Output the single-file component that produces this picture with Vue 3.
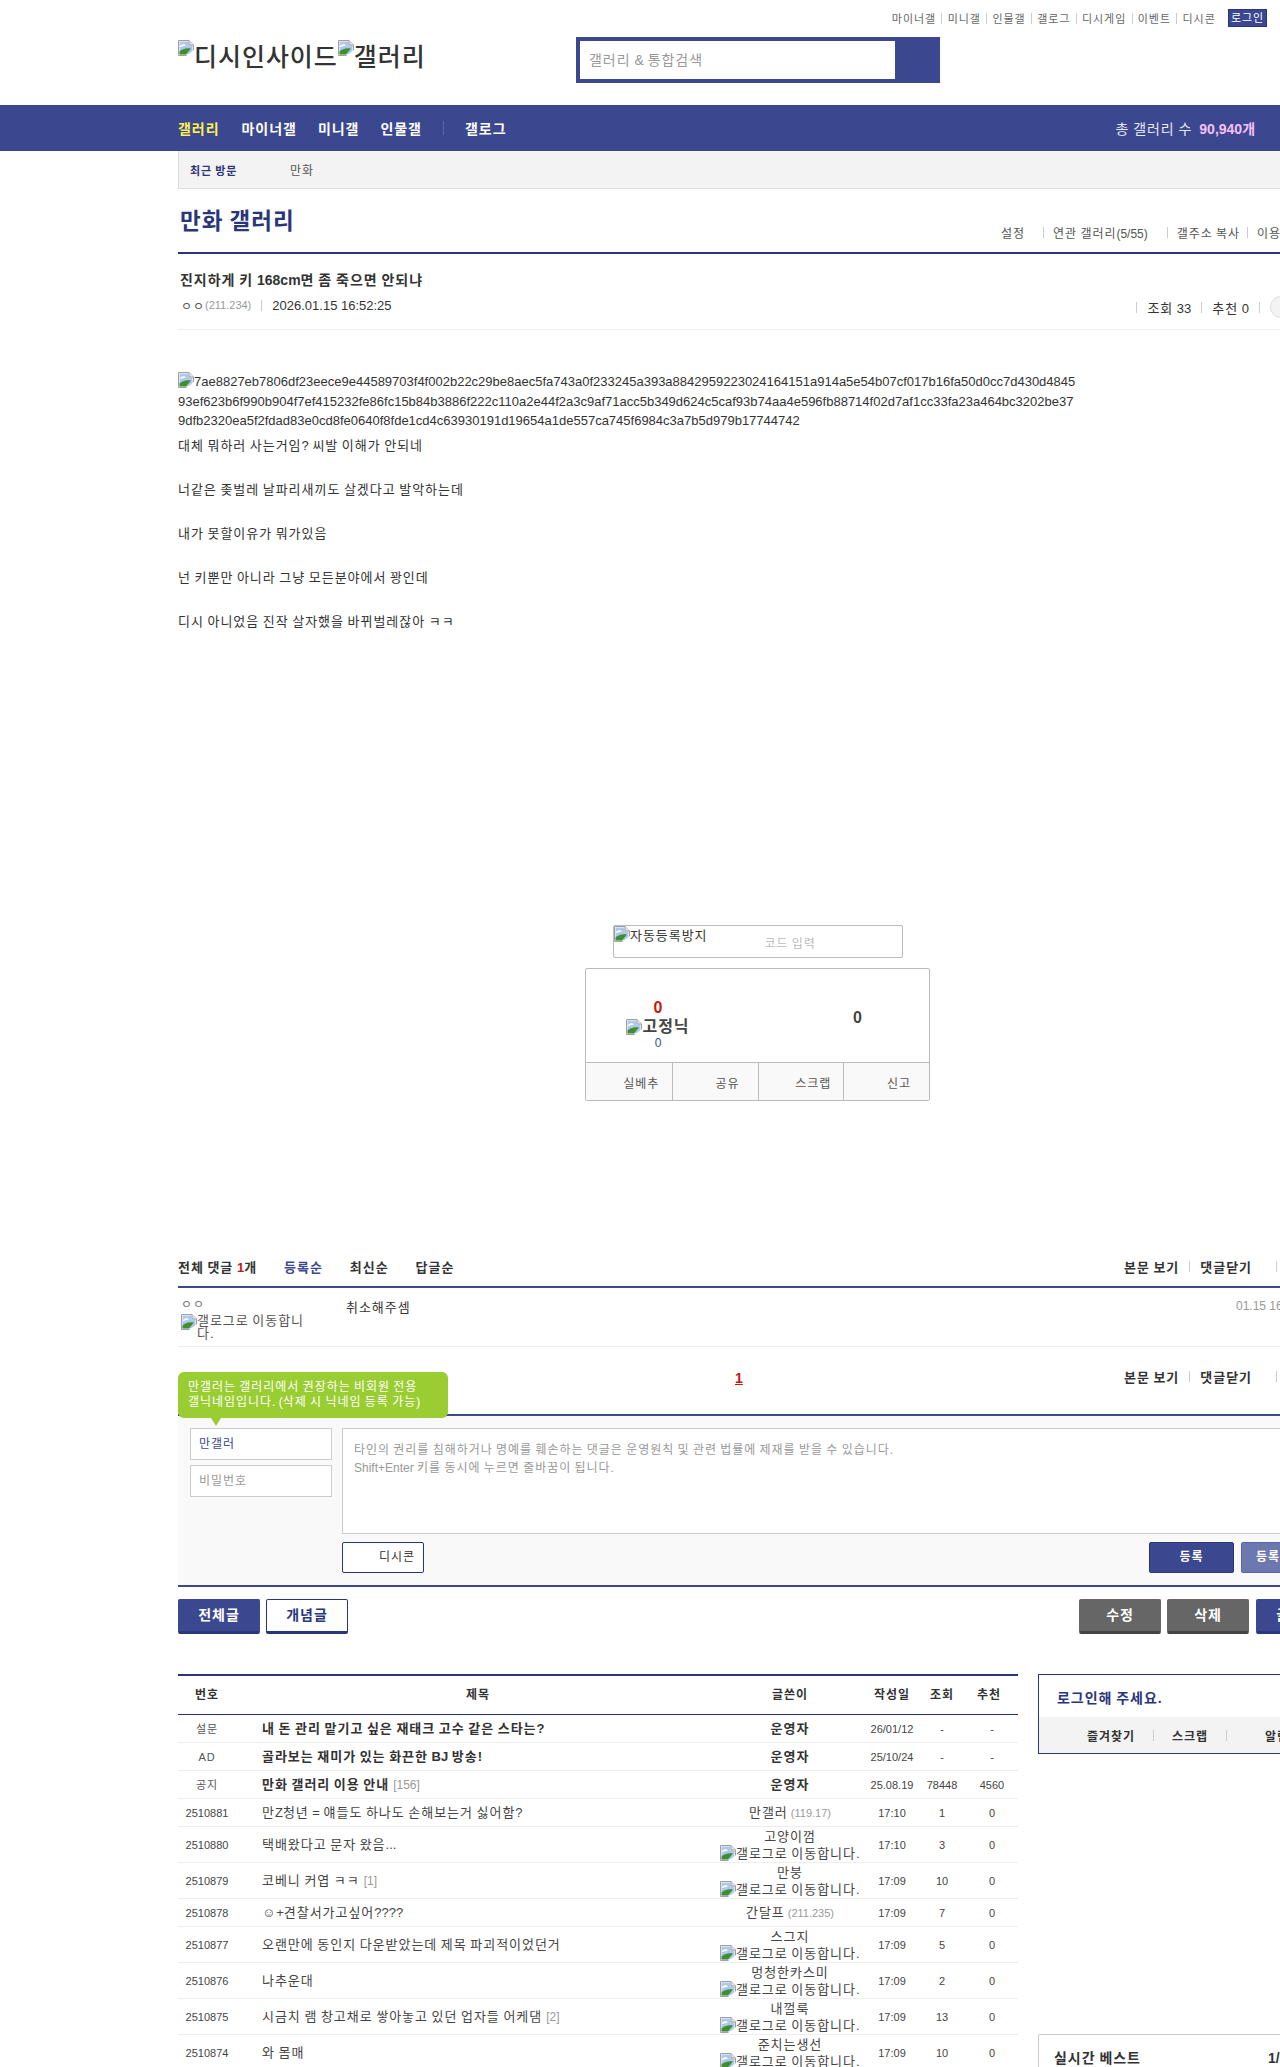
<script setup>
import { h } from 'vue'

// the hangul here sets on a full em, so .page spaces it out; ascii runs must stay at normal width
const T = (props) =>
  props.t.split(/([\x00-\x7f]+)/).filter(Boolean).map((run) =>
    /^[\x00-\x7f]/.test(run) ? h('span', { class: 'lat' }, run) : run
  )
T.props = ['t']

const topLinks = ['마이너갤', '미니갤', '인물갤', '갤로그', '디시게임', '이벤트', '디시콘']

const bodyLines = [
  '대체 뭐하러 사는거임? 씨발 이해가 안되네',
  '너같은 좆벌레 날파리새끼도 살겠다고 발악하는데',
  '내가 못할이유가 뭐가있음',
  '넌 키뿐만 아니라 그냥 모든분야에서 꽝인데',
  '디시 아니었음 진작 살자했을 바뀌벌레잖아 ㅋㅋ'
]

// notice rows come first and are bold, the taller rows have a gallog icon under the name
const rows = [
  { num: '설문', title: '내 돈 관리 맡기고 싶은 재태크 고수 같은 스타는?', name: '운영자', date: '26/01/12', views: '-', rec: '-', notice: true },
  { num: 'AD', title: '골라보는 재미가 있는 화끈한 BJ 방송!', name: '운영자', date: '25/10/24', views: '-', rec: '-', notice: true },
  { num: '공지', title: '만화 갤러리 이용 안내', reply: '[156]', name: '운영자', date: '25.08.19', views: '78448', rec: '4560', notice: true },
  { num: '2510881', title: '만Z청년 = 얘들도 하나도 손해보는거 싫어함?', name: '만갤러', ip: '(119.17)', date: '17:10', views: '1', rec: '0' },
  { num: '2510880', title: '택배왔다고 문자 왔음...', name: '고양이껌', gallog: true, date: '17:10', views: '3', rec: '0' },
  { num: '2510879', title: '코베니 커엽 ㅋㅋ', reply: '[1]', name: '만붕', gallog: true, date: '17:09', views: '10', rec: '0' },
  { num: '2510878', title: '☺+견찰서가고싶어????', name: '간달프', ip: '(211.235)', date: '17:09', views: '7', rec: '0' },
  { num: '2510877', title: '오랜만에 동인지 다운받았는데 제목 파괴적이었던거', name: '스그지', gallog: true, date: '17:09', views: '5', rec: '0' },
  { num: '2510876', title: '나추운대', name: '멍청한카스미', gallog: true, date: '17:09', views: '2', rec: '0' },
  { num: '2510875', title: '시금치 램 창고채로 쌓아놓고 있던 업자들 어케댐', reply: '[2]', name: '내껄룩', gallog: true, date: '17:09', views: '13', rec: '0' },
  { num: '2510874', title: '와 몸매', name: '준치는생선', gallog: true, date: '17:09', views: '10', rec: '0' }
]
</script>

<template>
  <div class="page">
    <svg class="defs" width="0" height="0">
      <symbol id="broken" viewBox="0 0 16 16">
        <path d="M0.5 0.5H11L15.5 5V15.5H0.5Z" fill="#fff" stroke="#a0a0a0" />
        <path d="M1.5 1.5H10.5V5.5H14.5V14.5H1.5Z" fill="#adc8ee" />
        <path d="M2 6C4 3.6 7 3.8 8 5.6C6 6 4 6.4 2 7Z" fill="#fff" />
        <path d="M1.5 14.5V11.5C4 9 8 7.5 13 8.5L8 14.5Z" fill="#3f8f2e" />
        <path d="M11 0.5V5H15.5" fill="#e4e4e4" stroke="#a0a0a0" />
        <path d="M8 16L16 10V16Z" fill="#fff" />
      </symbol>
    </svg>

    <header class="head">
      <div class="top-links">
        <template v-for="(link, i) in topLinks" :key="link">
          <a>{{ link }}</a>
          <i v-if="i < topLinks.length - 1" class="bar"></i>
        </template>
        <span class="login">로그인</span>
      </div>
      <div class="logo-row">
        <div class="logo">
          <svg class="broken"><use href="#broken" /></svg>디시인사이드<svg class="broken"><use href="#broken" /></svg>갤러리
        </div>
        <div class="search">
          <div class="search-input"><T t="갤러리 & 통합검색" /></div>
        </div>
      </div>
    </header>

    <nav class="nav">
      <a class="on">갤러리</a>
      <a>마이너갤</a>
      <a>미니갤</a>
      <a>인물갤</a>
      <i class="nav-bar"></i>
      <a>갤로그</a>
      <div class="nav-count">총 갤러리 수 <b><T t="90,940개" /></b></div>
    </nav>

    <main class="wrap">
      <div class="recent">
        <b>최근 방문</b>
        <span>만화</span>
      </div>

      <div class="gall-head">
        <h2>만화 갤러리</h2>
        <div class="gall-links">
          <a class="w-set">설정</a>
          <i class="bar"></i>
          <a class="w-rel"><T t="연관 갤러리(5/55)" /></a>
          <i class="bar"></i>
          <a class="w-copy">갤주소 복사</a>
          <i class="bar"></i>
          <a>이용</a>
        </div>
      </div>

      <div class="post-head">
        <h3><T t="진지하게 키 168cm면 좀 죽으면 안되냐" /></h3>
        <div class="post-meta">
          <div class="writer">
            <span class="nick">ㅇㅇ</span><span class="ip">(211.234)</span>
            <i class="bar"></i>
            <span class="date">2026.01.15 16:52:25</span>
          </div>
          <div class="counts">
            <i class="bar"></i>
            <span><T t="조회 33" /></span>
            <i class="bar"></i>
            <span><T t="추천 0" /></span>
            <i class="bar"></i>
            <span class="circle"></span>
          </div>
        </div>
      </div>

      <article class="post-body">
        <div class="hash">
          <svg class="broken"><use href="#broken" /></svg>7ae8827eb7806df23eece9e44589703f4f002b22c29be8aec5fa743a0f233245a393a8842959223024164151a914a5e54b07cf017b16fa50d0cc7d430d4845<br />93ef623b6f990b904f7ef415232fe86fc15b84b3886f222c110a2e44f2a3c9af71acc5b349d624c5caf93b74aa4e596fb88714f02d7af1cc33fa23a464bc3202be37<br />9dfb2320ea5f2fdad83e0cd8fe0640f8fde1cd4c63930191d19654a1de557ca745f6984c3a7b5d979b17744742
        </div>
        <p v-for="line in bodyLines" :key="line"><T :t="line" /></p>
      </article>

      <section class="vote-area">
        <div class="captcha">
          <span class="captcha-alt"><svg class="broken"><use href="#broken" /></svg>자동등록방지</span>
          <span class="captcha-ph">코드 입력</span>
        </div>
        <div class="vote">
          <div class="vote-top">
            <div class="vote-up">
              <b class="red">0</b>
              <div class="fixed"><svg class="broken"><use href="#broken" /></svg>고정닉</div>
              <span class="fixed-num">0</span>
            </div>
            <b class="vote-down">0</b>
          </div>
          <div class="vote-btns">
            <span>실베추</span>
            <span>공유</span>
            <span>스크랩</span>
            <span>신고</span>
          </div>
        </div>
      </section>

      <section class="cmt-bar">
        <div class="cmt-tabs">
          <b class="cmt-total">전체 댓글 <em class="lat">1</em>개</b>
          <b class="cur">등록순</b>
          <b>최신순</b>
          <b>답글순</b>
        </div>
        <div class="cmt-side">
          <b>본문 보기</b><i class="bar"></i><b>댓글닫기</b><i class="bar far"></i>
        </div>
      </section>

      <div class="cmt-row">
        <div class="cmt-who">
          <span class="cmt-nick">ㅇㅇ</span>
          <div class="cmt-gallog"><svg class="broken"><use href="#broken" /></svg><span>갤로그로 이동합니다.</span></div>
        </div>
        <div class="cmt-text">취소해주셈</div>
        <div class="cmt-date">01.15 16:58:11</div>
      </div>

      <div class="cmt-pager">
        <a class="page-num">1</a>
        <div class="cmt-side">
          <b>본문 보기</b><i class="bar"></i><b>댓글닫기</b><i class="bar far"></i>
        </div>
        <div class="tip">
          만갤러는 갤러리에서 권장하는 비회원 전용<br /><T t="갤닉네임입니다. (삭제 시 닉네임 등록 가능)" />
        </div>
      </div>

      <form class="cmt-form" @submit.prevent>
        <div class="form-main">
          <div class="form-user">
            <div class="field nick-field">만갤러</div>
            <div class="field">비밀번호</div>
          </div>
          <div class="form-text">
            <T t="타인의 권리를 침해하거나 명예를 훼손하는 댓글은 운영원칙 및 관련 법률에 제재를 받을 수 있습니다." /><br />
            <T t="Shift+Enter 키를 동시에 누르면 줄바꿈이 됩니다." />
          </div>
        </div>
        <div class="form-btns">
          <span class="dccon">디시콘</span>
          <span class="btn-row">
            <span class="submit">등록</span>
            <span class="submit light"><T t="등록+추천" /></span>
          </span>
        </div>
      </form>

      <div class="list-btns">
        <div class="btn-row">
          <span class="btn navy">전체글</span>
          <span class="btn outline">개념글</span>
        </div>
        <div class="btn-row">
          <span class="btn gray">수정</span>
          <span class="btn gray">삭제</span>
          <span class="btn navy write">글쓰기</span>
        </div>
      </div>

      <div class="bottom">
        <table class="list">
          <colgroup>
            <col class="c-num" />
            <col class="c-title" />
            <col class="c-name" />
            <col class="c-date" />
            <col class="c-views" />
            <col class="c-rec" />
          </colgroup>
          <thead>
            <tr>
              <th>번호</th>
              <th>제목</th>
              <th>글쓴이</th>
              <th>작성일</th>
              <th>조회</th>
              <th>추천</th>
            </tr>
          </thead>
          <tbody>
            <tr v-for="row in rows" :key="row.num" :class="{ notice: row.notice, tall: row.gallog }">
              <td class="num">{{ row.num }}</td>
              <td class="title">
                <span><T :t="row.title" /></span><em v-if="row.reply">{{ row.reply }}</em>
              </td>
              <td class="name">
                {{ row.name }}<small v-if="row.ip">{{ row.ip }}</small>
                <div v-if="row.gallog" class="gallog"><svg class="broken"><use href="#broken" /></svg>갤로그로 이동합니다.</div>
              </td>
              <td class="small">{{ row.date }}</td>
              <td class="small">{{ row.views }}</td>
              <td class="small rec">{{ row.rec }}</td>
            </tr>
          </tbody>
        </table>

        <aside class="side">
          <div class="login-box">
            <div class="login-msg">로그인해 주세요.</div>
            <div class="login-links">
              <b>즐겨찾기</b><i class="bar"></i><b>스크랩</b><i class="bar"></i><b class="alarm">알림</b>
            </div>
          </div>
          <div class="best">
            <b>실시간 베스트</b>
            <b class="best-page">1/5</b>
          </div>
        </aside>
      </div>
    </main>
  </div>
</template>

<style>
html, body {
  margin: 0;
  height: 2067px;
  overflow: hidden;
  background: #fff;
}
.lat {
  letter-spacing: 0;
  word-spacing: 0;
}
</style>

<style scoped>
.page {
  width: 1280px;
  height: 2067px;
  overflow: hidden;
  font-family: "Liberation Sans", "Noto Sans CJK KR", sans-serif;
  font-size: 12px;
  letter-spacing: 0.08em;
  word-spacing: -0.08em;
  color: #333;
}
.defs { position: absolute; }
.broken {
  width: 16px;
  height: 16px;
  vertical-align: top;
  flex: none;
}
.bar {
  display: inline-block;
  width: 1px;
  height: 11px;
  background: #ccc;
  flex: none;
}

/* header */
.head {
  height: 105px;
  box-sizing: border-box;
  padding: 9px 13px 0 178px;
}
.top-links {
  display: flex;
  justify-content: flex-end;
  align-items: center;
  height: 18px;
  gap: 5.25px;
  font-size: 11px;
  color: #666;
}
.login {
  margin-left: 7px;
  width: 39px;
  height: 18px;
  box-sizing: border-box;
  line-height: 16px;
  text-align: center;
  background: #3b4890;
  border: 1px solid #29367c;
  color: #fff;
}
.logo-row {
  display: flex;
  margin-top: 10px;
}
.logo {
  width: 398px;
  height: 46px;
  padding-top: 6px;
  box-sizing: border-box;
  font-size: 25px;
  font-weight: 500;
  line-height: 28px;
  color: #333;
  white-space: nowrap;
}
.logo .broken {
  position: relative;
  top: -3px;
}
.search {
  width: 364px;
  height: 46px;
  box-sizing: border-box;
  padding: 4px 45px 4px 4px;
  background: #3b4890;
}
.search-input {
  height: 38px;
  padding-left: 9px;
  background: #fff;
  font-size: 14px;
  line-height: 38px;
  color: #999;
}

/* nav */
.nav {
  display: flex;
  align-items: center;
  gap: 21px;
  height: 46px;
  padding: 0 24px 0 178px;
  background: #3b4890;
  font-size: 14px;
  font-weight: bold;
  color: #fff;
}
.nav .on { color: #fff14f; margin-right: 1px; }
.nav-bar {
  width: 1px;
  height: 14px;
  background: #5a66a8;
}
.nav-count {
  margin-left: auto;
  font-weight: normal;
  color: #e6e8f2;
}
.nav-count b {
  margin-left: 3px;
  color: #f7c0f5;
}

.wrap {
  width: 1160px;
  margin-left: 178px;
}
.recent {
  display: flex;
  align-items: center;
  height: 38px;
  box-sizing: border-box;
  padding-left: 11px;
  background: #f3f3f3;
  border-left: 1px solid #ddd;
  border-bottom: 1px solid #ddd;
}
.recent b {
  width: 100px;
  font-size: 11px;
  color: #29367c;
}
.recent span { color: #555; }

/* gallery title */
.gall-head {
  display: flex;
  align-items: flex-end;
  justify-content: space-between;
  height: 65px;
  box-sizing: border-box;
  border-bottom: 2px solid #29367c;
}
.gall-head h2 {
  margin: 0 0 12px 2px;
  font-size: 22.5px;
  line-height: 36px;
  font-weight: bold;
  color: #29367c;
}
.gall-links {
  display: flex;
  align-items: center;
  gap: 9px;
  width: 337px;
  margin-bottom: 11px;
  color: #555;
  white-space: nowrap;
}
.w-set { margin-right: 9px; }
.w-rel { margin-right: 10px; }
.w-copy { margin-right: -2px; }

/* post head */
.post-head {
  height: 76px;
  box-sizing: border-box;
  padding: 0 2px;
  border-bottom: 1px solid #eee;
}
.post-head h3 {
  margin: 0;
  padding-top: 16px;
  font-size: 14px;
  line-height: 20px;
  color: #333;
}
.post-meta {
  display: flex;
  justify-content: space-between;
  margin-top: 6px;
  padding-left: 1px;
}
.writer {
  display: flex;
  align-items: center;
  height: 18px;
  gap: 10px;
}
.ip {
  margin-left: -10px;
  font-size: 11px;
  letter-spacing: 0;
  color: #999;
}
.date {
  font-size: 13px;
  letter-spacing: 0;
  word-spacing: 0;
}
.nick { color: #555; }
.counts {
  display: flex;
  align-items: center;
  gap: 10px;
  height: 22px;
  margin-right: 44px;
  font-size: 13px;
  white-space: nowrap;
}
.circle {
  width: 22px;
  height: 22px;
  flex: none;
  border-radius: 50%;
  border: 1px solid #ddd;
  box-sizing: border-box;
  background: #f3f3f3;
}

/* post body */
.post-body {
  width: 900px;
  height: 550px;
  padding-top: 42px;
  box-sizing: border-box;
  font-size: 13px;
  line-height: 19.5px;
}
.hash {
  word-break: break-all;
  letter-spacing: 0;
  margin-bottom: 4px;
}
.post-body p {
  margin: 0 0 22px;
  line-height: 22px;
}

/* captcha and votes */
.vote-area {
  display: flex;
  flex-direction: column;
  align-items: flex-start;
  height: 370px;
  padding: 45px 0 0 407px;
  box-sizing: border-box;
}
.captcha {
  display: flex;
  width: 290px;
  height: 33px;
  margin-left: 28px;
  box-sizing: border-box;
  border: 1px solid #bbb;
  border-radius: 2px;
}
.captcha-alt {
  font-size: 13px;
  line-height: 20px;
  color: #333;
  white-space: nowrap;
}
.captcha-ph {
  margin: 8px 0 0 57px;
  color: #bbb;
}
.vote {
  width: 345px;
  margin-top: 10px;
  box-sizing: border-box;
  border: 1px solid #bbb;
  border-radius: 2px;
}
.vote-top {
  display: flex;
  height: 93px;
  border-bottom: 1px solid #bbb;
}
.vote-up {
  width: 144px;
  padding-top: 30px;
  box-sizing: border-box;
  display: flex;
  flex-direction: column;
  align-items: center;
}
.red {
  font-size: 16px;
  line-height: 18px;
  letter-spacing: 0;
  color: #c41a0e;
}
.fixed {
  display: flex;
  align-items: center;
  font-size: 16px;
  line-height: 19px;
  font-weight: bold;
  color: #444;
  white-space: nowrap;
}
.fixed-num {
  color: #3b4890;
  letter-spacing: 0;
  line-height: 14px;
}
.vote-down {
  margin: 40px 0 0 123px;
  font-size: 16px;
  line-height: 18px;
  letter-spacing: 0;
  color: #444;
}
.vote-btns {
  display: grid;
  grid-template-columns: repeat(4, 1fr);
  height: 37px;
  background: #f9f9f9;
}
.vote-btns span {
  padding: 13px 0 0 25px;
  text-align: center;
  line-height: 16px;
  color: #555;
  border-left: 1px solid #bbb;
}
.vote-btns span:first-child { border-left: 0; }

/* comments */
.cmt-bar {
  display: flex;
  justify-content: space-between;
  align-items: center;
  height: 38px;
  box-sizing: border-box;
  border-bottom: 2px solid #3b4890;
  font-size: 13px;
  padding-bottom: 4px;
}
.cmt-tabs {
  display: flex;
  gap: 27px;
}
.cmt-total em {
  font-style: normal;
  color: #c41a0e;
}
.cur { color: #3b4890; }
.cmt-side {
  display: flex;
  align-items: center;
  gap: 10px;
  width: 214px;
  font-size: 13px;
}
.far { margin-left: 14px; }
.cmt-row {
  display: flex;
  height: 59px;
  box-sizing: border-box;
  padding-top: 11px;
  border-bottom: 1px solid #eee;
}
.cmt-who {
  width: 168px;
  padding-left: 3px;
  box-sizing: border-box;
  color: #777;
  line-height: 13px;
}
.cmt-nick {
  display: block;
  height: 13px;
}
.cmt-gallog {
  display: flex;
  width: 129px;
  line-height: 13px;
  font-size: 13px;
  margin-top: 2px;
  color: #555;
}
.cmt-text {
  width: 890px;
  font-size: 13px;
  line-height: 18px;
}
.cmt-date {
  color: #999;
  letter-spacing: 0;
  word-spacing: 0;
  white-space: nowrap;
  line-height: 14px;
}
.cmt-pager {
  position: relative;
  display: flex;
  justify-content: space-between;
  height: 67px;
  padding-top: 23px;
  box-sizing: border-box;
}
.page-num {
  margin-left: 557px;
  font-size: 14px;
  font-weight: bold;
  letter-spacing: 0;
  line-height: 16px;
  height: 16px;
  color: #c41a0e;
  text-decoration: underline;
}
.cmt-pager .cmt-side {
  height: 14px;
  margin-top: -1px;
}
.tip {
  position: absolute;
  left: 0;
  top: 25px;
  width: 270px;
  height: 46px;
  padding: 8px 10px;
  box-sizing: border-box;
  background: #9acd32;
  border-radius: 6px;
  color: #fff;
  line-height: 15px;
  font-size: 12px;
  white-space: nowrap;
  z-index: 1;
}
.tip::after {
  content: "";
  position: absolute;
  left: 33px;
  top: 46px;
  border: 5px solid transparent;
  border-top: 8px solid #9acd32;
  border-bottom: 0;
}

/* comment form */
.cmt-form {
  height: 173px;
  box-sizing: border-box;
  padding: 12px 12px 0 12px;
  background: #f9f9f9;
  border-top: 2px solid #3b4890;
  border-bottom: 2px solid #3b4890;
}
.form-main {
  display: flex;
  gap: 10px;
}
.form-user {
  display: flex;
  flex-direction: column;
  gap: 5px;
  width: 142px;
}
.field {
  height: 32px;
  padding-left: 8px;
  box-sizing: border-box;
  background: #fff;
  border: 1px solid #ccc;
  line-height: 30px;
  color: #999;
}
.nick-field { color: #3b4890; }
.form-text {
  flex: 1;
  height: 106px;
  padding: 12px 11px;
  box-sizing: border-box;
  background: #fff;
  border: 1px solid #ccc;
  line-height: 18px;
  color: #999;
}
.form-btns {
  display: flex;
  justify-content: space-between;
  margin: 8px 0 0 152px;
}
.form-btns .btn-row { gap: 7px; }
.dccon {
  width: 82px;
  height: 31px;
  padding-right: 8px;
  box-sizing: border-box;
  background: #fff;
  border: 1px solid #29367c;
  border-radius: 2px;
  text-align: right;
  line-height: 29px;
}
.btn-row {
  display: flex;
  gap: 6px;
}
.submit {
  width: 85px;
  height: 31px;
  box-sizing: border-box;
  background: #3b4890;
  border: 1px solid #29367c;
  border-radius: 2px;
  color: #fff;
  font-weight: bold;
  text-align: center;
  line-height: 29px;
}
.light {
  background: #6d78ae;
  border-color: #5a66a8;
}

/* list buttons */
.list-btns {
  display: flex;
  justify-content: space-between;
  margin-top: 12px;
}
.btn {
  width: 82px;
  height: 35px;
  box-sizing: border-box;
  border-radius: 2px;
  border: 1px solid transparent;
  border-bottom-width: 3px;
  font-size: 14px;
  font-weight: bold;
  text-align: center;
  line-height: 31px;
  color: #fff;
}
.navy {
  background: #3b4890;
  border-color: #3b4890;
  border-bottom-color: #29367c;
}
.write { margin-left: 1px; }
.outline {
  background: #fff;
  border-color: #29367c;
  color: #29367c;
}
.gray {
  background: #666;
  border-color: #666;
  border-bottom-color: #444;
}

/* post list */
.bottom {
  display: flex;
  gap: 20px;
  margin-top: 40px;
}
.list {
  width: 840px;
  flex: none;
  align-self: flex-start;
  border-collapse: collapse;
  table-layout: fixed;
  border-top: 2px solid #29367c;
}
.c-num { width: 58px; }
.c-title { width: 484px; }
.c-name { width: 140px; }
.c-date { width: 64px; }
.c-views { width: 36px; }
.list th {
  height: 35px;
  padding: 0 0 3px;
  font-size: 12px;
  border-bottom: 1px solid #29367c;
}
.list td {
  height: 27px;
  padding: 0;
  border-bottom: 1px solid #eee;
  text-align: center;
  font-size: 11px;
  line-height: 14px;
  color: #444;
  white-space: nowrap;
  overflow: hidden;
}
.list tr.tall td { height: 35px; }
.list .num { letter-spacing: 0; }
.list .notice .num { letter-spacing: 0.08em; color: #555; }
.list .title {
  padding-left: 26px;
  text-align: left;
  font-size: 13px;
}
.list .title em {
  margin-left: 4px;
  font-style: normal;
  font-size: 12px;
  letter-spacing: 0;
  color: #999;
}
.list .small {
  font-size: 11px;
  letter-spacing: 0;
}
.list .rec { padding-left: 6px; }
.list .name {
  font-size: 13px;
  line-height: 17px;
}
.list .name small {
  margin-left: 3px;
  font-size: 11px;
  letter-spacing: 0;
  color: #999;
}
.gallog {
  font-size: 13px;
  line-height: 17px;
}
.notice .title span, .notice .name { font-weight: bold; color: #333; }

/* sidebar */
.side {
  width: 320px;
  flex: none;
}
.login-box {
  height: 80px;
  box-sizing: border-box;
  border: 1px solid #29367c;
}
.login-msg {
  height: 42px;
  padding: 14px 0 0 18px;
  box-sizing: border-box;
  font-size: 14px;
  font-weight: bold;
  line-height: 18px;
  color: #29367c;
}
.login-links {
  display: flex;
  align-items: center;
  gap: 18px;
  height: 36px;
  padding-left: 48px;
  background: #f3f3f3;
  white-space: nowrap;
}
.alarm { margin-left: 20px; }
.best {
  display: flex;
  gap: 127px;
  height: 60px;
  margin-top: 280px;
  padding: 14px 0 0 15px;
  box-sizing: border-box;
  border-left: 1px solid #ccc;
  border-top: 1px solid #ccc;
  border-radius: 2px 0 0 0;
  font-size: 14px;
  line-height: 18px;
}
.best-page { letter-spacing: 0; }
</style>
